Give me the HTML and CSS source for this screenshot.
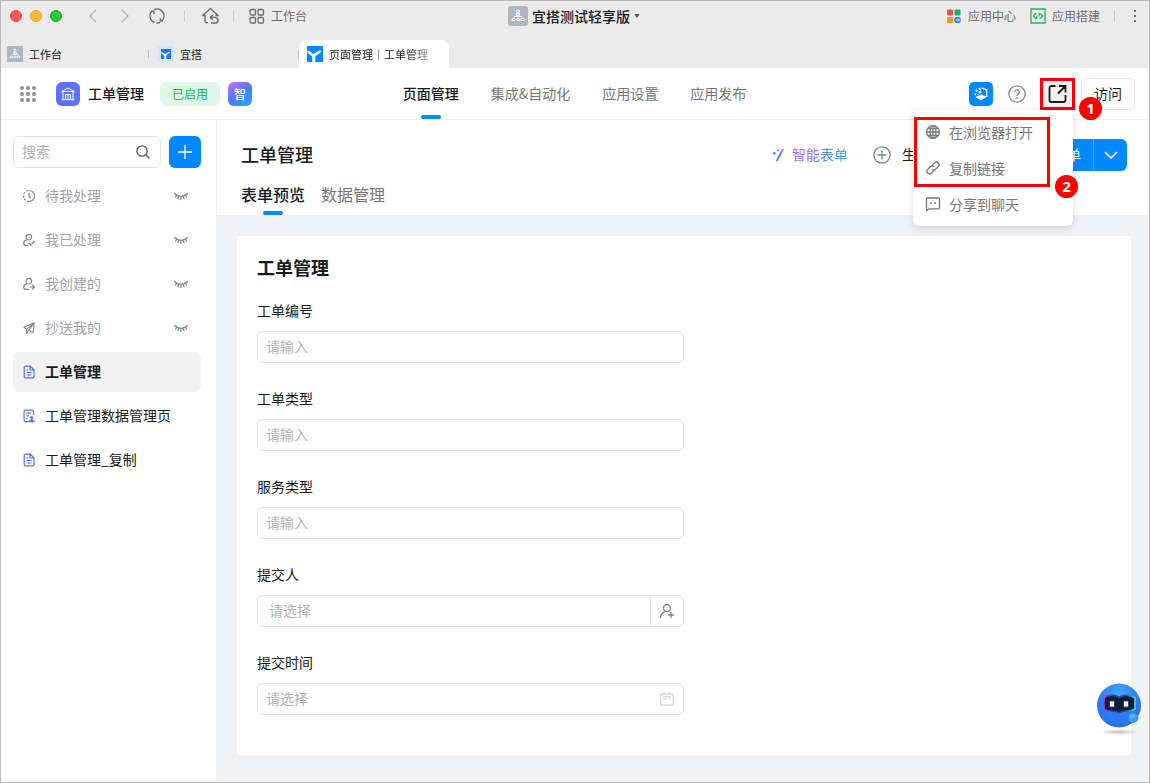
FILE: index.html
```html
<!DOCTYPE html>
<html lang="zh-CN">
<head>
<meta charset="utf-8">
<title>页面管理｜工单管理</title>
<link rel="stylesheet" href="styles.css">
</head>
<body>
<svg class="sprite" aria-hidden="true">
  <symbol id="eye-closed" viewBox="0 0 14 8">
    <path d="M.5 1.500Q7 7.300 13.500 1.500M2.500 3.200 1.500 5M4.700 4.300 4.100 6.300M7 4.700v2.600M9.300 4.300l.6 2M11.500 3.200l1 1.800" fill="none" stroke="#7f868c" stroke-width="1.300" stroke-linecap="round"/>
  </symbol>
  <symbol id="org" viewBox="0 0 20 20">
    <g fill="none" stroke="#fff" stroke-width="1">
      <circle cx="10" cy="5.600" r="1.500"/><path d="M8.200 9.200V9a1.800 1.800 0 0 1 3.600 0v.2zM6 10.500h8"/>
      <path d="M4 14.500v-.7a1.500 1.500 0 0 1 3 0v.7zM8.500 14.500v-.7a1.500 1.500 0 0 1 3 0v.7zM13 14.500v-.7a1.500 1.500 0 0 1 3 0v.7z"/>
    </g>
  </symbol>
  <symbol id="yida" viewBox="0 0 16 16">
    <path d="M0 5.200c1.600-.5 3.400.1 4.600 1.500C5.700 8 6.800 8 8.200 7.100L13.200 4.100 14.200 6.100 9.800 8.900C8.600 9.700 8.300 10.400 8.300 11.600V16H5.300V12C5.300 10.500 4.800 9.900 3.700 9.200C2.300 8.500 1 7.500 0 5.200z" fill="#fff"/>
  </symbol>
  <symbol id="doc" viewBox="0 0 12 14">
    <path d="M2.500 1.200h4.700L11 4.800v6.700a1.300 1.300 0 0 1-1.300 1.300H2.500a1.300 1.300 0 0 1-1.300-1.300v-9A1.300 1.300 0 0 1 2.500 1.200zM7 1.400v3.600h3.800M3.500 4.900h1.700M3.500 7.500h5M3.500 10h5" fill="none" stroke="#4f74ff" stroke-width="1.200" stroke-linejoin="round"/>
  </symbol>
</svg>

<header class="titlebar">
  <div class="toolbar">
    <div class="toolbar-left">
      <div class="lights"><span class="light red"></span><span class="light yellow"></span><span class="light green"></span></div>
      <button class="tool" aria-label="后退"><svg width="16" height="16" viewBox="0 0 16 16"><path d="M11 2 5 8l6 6" fill="none" stroke="#b0b0b0" stroke-width="1.300"/></svg></button>
      <button class="tool" aria-label="前进"><svg width="16" height="16" viewBox="0 0 16 16"><path d="m5 2 6 6-6 6" fill="none" stroke="#b0b0b0" stroke-width="1.300"/></svg></button>
      <button class="tool" aria-label="刷新"><svg width="16" height="16" viewBox="0 0 16 16"><path d="M5.300 14.500A7 7 0 0 1 3 3.100M5 1.700A7 7 0 0 1 13 12.900M11.200 14.200A7 7 0 0 1 7.500 15M2 3.200h2.800V6M14.200 12.800h-2.800V10" fill="none" stroke="#6a6a6a" stroke-width="1.400"/></svg></button>
      <span class="rule"></span>
      <button class="tool" aria-label="主页"><svg width="18" height="18" viewBox="0 0 18 18"><path d="M7 15.600H5.500a1.400 1.400 0 0 1-1.400-1.400V8.500H1.700L9.500 1.500l7.500 7h-2.600M9.500 10.400h4.700a2.800 2.800 0 0 1 0 5.600H10M11.800 8l-2.500 2.400 2.500 2.400" fill="none" stroke="#6a6a6a" stroke-width="1.400" stroke-linejoin="round"/></svg></button>
      <span class="rule"></span>
      <button class="tool tool-label"><svg width="16" height="16" viewBox="0 0 16 16"><g fill="none" stroke="#6a6a6a" stroke-width="1.300"><rect x="1" y="1.500" width="5.500" height="5.500" rx="1.200"/><rect x="9" y="1.500" width="5.500" height="5.500" rx="1.200"/><rect x="1" y="9.500" width="5.500" height="5.500" rx="1.200"/><rect x="9" y="9.500" width="5.500" height="5.500" rx="1.200"/></g></svg>工作台</button>
    </div>
    <button class="org-switch"><span class="org-icon"><svg width="20" height="20"><use href="#org"/></svg></span>宜搭测试轻享版<svg width="6" height="4" viewBox="0 0 6 4"><path d="M.3 0h5.400L3 4z" fill="#555"/></svg></button>
    <div class="toolbar-right">
      <button class="tool tool-label"><svg width="16" height="16" viewBox="0 0 16 16"><rect x="1" y="1.500" width="6" height="6" rx="1" fill="#fb4a3e"/><rect x="8.500" y="1.500" width="6" height="6" rx="1" fill="#16b364"/><rect x="1" y="9" width="6" height="6" rx="1" fill="#ff9219"/><circle cx="11.500" cy="12" r="3.300" fill="#2f80f5"/><path d="M9.700 12h3.400M11.800 10.500l1.500 1.500-1.500 1.500" fill="none" stroke="#fff" stroke-width=".9"/></svg>应用中心</button>
      <button class="tool tool-label"><svg width="16" height="16" viewBox="0 0 16 16"><path d="M1 1h14v14H1z" fill="none" stroke="#22b455" stroke-width="1.300"/><path d="M6.500 5.500h-1L3.300 8l2.200 2.500h1.300V7.500M9.500 10.500h1L12.700 8l-2.200-2.500H9.200v3" fill="none" stroke="#22b455" stroke-width="1.200"/></svg>应用搭建</button>
      <span class="rule"></span>
      <button class="tool" aria-label="更多"><svg width="16" height="16" viewBox="0 0 16 16"><g fill="#707070"><rect x="7" y="2" width="2" height="2"/><rect x="7" y="7" width="2" height="2"/><rect x="7" y="12" width="2" height="2"/></g></svg></button>
    </div>
  </div>
  <nav class="window-tabs" aria-label="窗口标签">
    <a class="window-tab" href="#"><span class="tab-icon gray"><svg width="16" height="16"><use href="#org"/></svg></span>工作台</a>
    <a class="window-tab" href="#"><span class="tab-icon pale"><svg width="10" height="10"><rect width="10" height="10" fill="#1677f5"/><use href="#yida"/></svg></span>宜搭</a>
    <a class="window-tab current" href="#"><span class="tab-icon blue"><svg width="16" height="16"><use href="#yida"/></svg></span><span class="fading">页面管理｜工单管理</span></a>
  </nav>
</header>

<header class="app-header">
  <div class="app-left">
    <button class="tool" aria-label="全部应用"><svg width="16" height="16" viewBox="0 0 16 16"><g fill="#8a9096"><circle cx="2" cy="2" r="2"/><circle cx="8" cy="2" r="2"/><circle cx="14" cy="2" r="2"/><circle cx="2" cy="8" r="2"/><circle cx="8" cy="8" r="2"/><circle cx="14" cy="8" r="2"/><circle cx="2" cy="14" r="2"/><circle cx="8" cy="14" r="2"/><circle cx="14" cy="14" r="2"/></g></svg></button>
    <span class="app-logo"><svg width="14" height="14" viewBox="0 0 14 14"><path d="M.8 4.500 7 1l6.200 3.500zM2 4.800v7.400M12 4.800v7.400M.5 12.700h13M4.500 12V7.500h5V12M7 7.500V12" fill="none" stroke="#fff" stroke-width="1"/></svg></span>
    <strong class="app-name">工单管理</strong>
    <span class="status">已启用</span>
    <span class="smart">智</span>
  </div>
  <nav class="app-nav" aria-label="应用导航">
    <a class="current" href="#">页面管理</a>
    <a href="#">集成&amp;自动化</a>
    <a href="#">应用设置</a>
    <a href="#">应用发布</a>
  </nav>
  <div class="app-right">
    <button class="assistant" aria-label="助手"><svg width="16" height="16" viewBox="0 0 16 16"><path d="M2.300 11 8 8.600l5.700 2.200L8 14.600z" fill="#fff"/><path d="M8.500 1.800 13.700 4v7" fill="none" stroke="#fff" stroke-width="1.300"/><path d="M2 4.300 4 3.300l1.400 1.200L3.700 6.200zM1.600 7.200l1.800.6-.6 1.800-1.200-.5zM5.200 2.400 7.200 1.500l.8 1.900-1.800.7zM5.200 5.600l2.600-1.100.8 1.800-2.200 1.500zM4.200 7.600l1.400.4-.9 1.300z" fill="#fff"/></svg></button>
    <button class="tool" aria-label="帮助"><svg width="18" height="18" viewBox="0 0 18 18"><circle cx="9" cy="9" r="8.200" fill="none" stroke="#878d93" stroke-width="1.300"/><path d="M6.700 7.200a2.300 2.300 0 1 1 3.400 2C9.300 9.700 9 10 9 10.900" fill="none" stroke="#878d93" stroke-width="1.300"/><circle cx="9" cy="13" r=".9" fill="#878d93"/></svg></button>
    <div class="share">
      <button class="share-button" aria-label="分享" aria-expanded="true"><svg width="20" height="20" viewBox="0 0 20 20"><path d="M7.500 2H3.500a2 2 0 0 0-2 2v12a2 2 0 0 0 2 2h12a2 2 0 0 0 2-2v-5M11 2h6.500v6.500M17.500 2l-7.500 7.500" fill="none" stroke="#171a1d" stroke-width="1.800"/></svg></button>
      <span class="step step-one">1</span>
      <div class="share-menu">
        <button class="menu-item"><svg width="16" height="16" viewBox="0 0 16 16"><g fill="none" stroke="#72777b" stroke-width="1.300"><circle cx="8" cy="8" r="6.400"/><ellipse cx="8" cy="8" rx="3" ry="6.400"/><path d="M8 1.600v12.800M1.600 8h12.800M2.600 4.700h10.800M2.600 11.300h10.800"/></g></svg>在浏览器打开</button>
        <button class="menu-item"><svg width="16" height="16" viewBox="0 0 16 16"><path d="M6.800 5.600 9.500 2.900a2.650 2.650 0 0 1 3.750 3.750L10.600 9.300a2.650 2.650 0 0 1-3.800 0M9.200 10.400l-2.700 2.700a2.650 2.650 0 0 1-3.750-3.750L5.400 6.700a2.650 2.650 0 0 1 3.800 0" fill="none" stroke="#72777b" stroke-width="1.300"/></svg>复制链接</button>
        <button class="menu-item"><svg width="16" height="16" viewBox="0 0 16 16"><path d="M2.500 2h11a1 1 0 0 1 1 1v8.800a1 1 0 0 1-1 1H4.200L1.500 14.600V3a1 1 0 0 1 1-1z" fill="none" stroke="#72777b" stroke-width="1.300"/><path d="M5 6.300h1.600v1.600H5zM9.400 6.300H11v1.600H9.400z" fill="#72777b"/></svg>分享到聊天</button>
        <span class="outline"></span>
        <span class="step step-two">2</span>
      </div>
    </div>
    <button class="visit">访问</button>
  </div>
</header>

<div class="workspace">
  <aside class="sidebar">
    <div class="search-row">
      <div class="search"><input type="search" placeholder="搜索" aria-label="搜索"><svg width="14" height="14" viewBox="0 0 14 14"><circle cx="6" cy="6" r="5.200" fill="none" stroke="#555a5e" stroke-width="1.300"/><path d="m9.800 9.800 3.600 3.600" stroke="#555a5e" stroke-width="1.400"/></svg></div>
      <button class="add" aria-label="新建"><svg width="14" height="14" viewBox="0 0 14 14"><path d="M7 0v14M0 7h14" stroke="#fff" stroke-width="1.300"/></svg></button>
    </div>
    <nav class="pages" aria-label="页面">
      <a class="page muted" href="#"><svg width="12" height="14" viewBox="0 0 12 14"><path d="M6 1.500a5.500 5.500 0 0 1 0 11M6 4v3.300l2 1.700" fill="none" stroke="#7f868c" stroke-width="1.200"/><path d="M6 12.500a5.500 5.500 0 0 1 0-11" fill="none" stroke="#7f868c" stroke-width="1.200" stroke-dasharray="2 1.500"/></svg><span>待我处理</span><svg width="14" height="8"><use href="#eye-closed"/></svg></a>
      <a class="page muted" href="#"><svg width="12" height="14" viewBox="0 0 12 14"><path d="M3.900 6.800C1.800 7.200.7 8.600.7 10.300c0 1.200.8 2 2 2h2.500M5.800 9.800l2.100 2.300 3.600-4.200" fill="none" stroke="#7f868c" stroke-width="1.200"/><circle cx="5.800" cy="4.200" r="2.800" fill="none" stroke="#7f868c" stroke-width="1.200"/></svg><span>我已处理</span><svg width="14" height="8"><use href="#eye-closed"/></svg></a>
      <a class="page muted" href="#"><svg width="12" height="14" viewBox="0 0 12 14"><path d="M3.900 6.800C1.800 7.200.7 8.600.7 10.300c0 1.200.8 2 2 2h3.500M6.500 10h5M9.200 7.600l2.400 2.400-2.400 2.400" fill="none" stroke="#7f868c" stroke-width="1.200"/><circle cx="5.800" cy="4.200" r="2.800" fill="none" stroke="#7f868c" stroke-width="1.200"/></svg><span>我创建的</span><svg width="14" height="8"><use href="#eye-closed"/></svg></a>
      <a class="page muted" href="#"><svg width="12" height="14" viewBox="0 0 12 14"><path d="M11.300 1.800.8 6.300l2.900 1.900L11.300 1.800l-1.100 9.900-4.700-2.400zM3.700 8.200v4.300l1.800-3.200" fill="none" stroke="#7f868c" stroke-width="1.100" stroke-linejoin="round"/></svg><span>抄送我的</span><svg width="14" height="8"><use href="#eye-closed"/></svg></a>
      <a class="page current" href="#"><svg width="12" height="14"><use href="#doc"/></svg><span>工单管理</span></a>
      <a class="page" href="#"><svg width="12" height="14" viewBox="0 0 12 14"><path d="M5.500 12.600h-3A1.400 1.400 0 0 1 1.100 11.200V2.600a1.400 1.400 0 0 1 1.400-1.400h6.600a1.400 1.400 0 0 1 1.400 1.400V6M3.400 4.200h4.800M3.400 6.800H6M3.400 9.400h1.200" fill="none" stroke="#4f74ff" stroke-width="1.200"/><circle cx="8.700" cy="8.400" r="1.500" fill="#4f74ff"/><path d="M5.600 13.200v-1.400l2.200-.9V9.500h1.800v1.400l2.200.9v1.400z" fill="#4f74ff"/></svg><span>工单管理数据管理页</span></a>
      <a class="page" href="#"><svg width="12" height="14"><use href="#doc"/></svg><span>工单管理_复制</span></a>
    </nav>
  </aside>

  <main class="main">
    <div class="main-head">
      <div class="title-row">
        <h1>工单管理</h1>
        <button class="action smart-form"><svg width="12" height="14" viewBox="0 0 12 14"><defs><linearGradient id="wand" x1="1" y1="0" x2="0" y2="1"><stop offset="0" stop-color="#c56af0"/><stop offset=".6" stop-color="#4a7dff"/><stop offset="1" stop-color="#2f9cff"/></linearGradient></defs><path d="M10.800 1.500 5 12.500" stroke="url(#wand)" stroke-width="1.800" stroke-linecap="round"/><path d="m2.300 3.200.7 1.300 1.300.7L3 5.900 2.300 7.200l-.7-1.300L.3 5.200l1.300-.7zM5 1.800h2v1.400H5z" fill="#3f86ff"/></svg><span>智能表单</span></button>
        <button class="action generate"><svg width="18" height="18" viewBox="0 0 18 18"><circle cx="9" cy="9" r="8.200" fill="none" stroke="#7f868c" stroke-width="1.300"/><path d="M9 4.500v9M4.500 9h9" stroke="#7f868c" stroke-width="1.300"/></svg><span>生成</span></button>
        <div class="split"><button class="edit">编辑表单</button><button class="more" aria-label="更多编辑操作"><svg width="14" height="8" viewBox="0 0 14 8"><path d="m1 1 6 6 6-6" fill="none" stroke="#fff" stroke-width="1.600"/></svg></button></div>
      </div>
      <nav class="view-tabs" aria-label="视图"><a class="current" href="#">表单预览</a><a href="#">数据管理</a></nav>
    </div>
    <form class="card">
      <h2>工单管理</h2>
      <div class="field"><label for="number">工单编号</label><div class="control"><input id="number" type="text" placeholder="请输入"></div></div>
      <div class="field"><label for="type">工单类型</label><div class="control"><input id="type" type="text" placeholder="请输入"></div></div>
      <div class="field"><label for="service">服务类型</label><div class="control"><input id="service" type="text" placeholder="请输入"></div></div>
      <div class="field"><label for="person">提交人</label><div class="control person"><input id="person" type="text" placeholder="请选择"><button type="button" aria-label="选择人员"><svg width="16" height="16" viewBox="0 0 16 16"><circle cx="8" cy="5" r="3.500" fill="none" stroke="#7f868c" stroke-width="1.300"/><path d="M1.500 15c.2-3 1.600-5.200 4.400-6.400M12 9.200v5.600M9.200 12h5.600" fill="none" stroke="#7f868c" stroke-width="1.500"/></svg></button></div></div>
      <div class="field"><label for="time">提交时间</label><div class="control"><input id="time" type="text" placeholder="请选择"><svg class="calendar" width="14" height="14" viewBox="0 0 14 14"><path d="M2 2h10a1.300 1.300 0 0 1 1.300 1.300v8.400A1.300 1.300 0 0 1 12 13H2a1.300 1.300 0 0 1-1.300-1.300V3.300A1.300 1.300 0 0 1 2 2zM4 .3v2M10 .3v2M3.300 4.800h7.400M3.300 7h3.900M9 7h1.500" fill="none" stroke="#c5c9cc" stroke-width="1.100"/></svg></div></div>
    </form>
  </main>
</div>

<button class="robot" aria-label="智能客服">
  <svg width="46" height="54" viewBox="0 0 46 54">
    <defs>
      <radialGradient id="body" cx=".5" cy=".25" r=".8"><stop offset="0" stop-color="#45a6f8"/><stop offset=".6" stop-color="#2c7bf2"/><stop offset="1" stop-color="#2a6fe8"/></radialGradient>
      <linearGradient id="rim"><stop offset="0" stop-color="#c22cf2"/><stop offset=".3" stop-color="#2b3c9d"/><stop offset=".7" stop-color="#2b4c9d"/><stop offset="1" stop-color="#34e1e4"/></linearGradient>
      <radialGradient id="floor"><stop offset="0" stop-color="#bdbdbd"/><stop offset="1" stop-color="#bdbdbd" stop-opacity="0"/></radialGradient>
    </defs>
    <ellipse cx="23" cy="50" rx="20" ry="3" fill="url(#floor)"/>
    <circle cx="23" cy="23.500" r="22" fill="url(#body)"/>
    <path d="M11 14c4-1 9-.5 12 1.500 3-2 8-2.500 12-1.500l4 2v11l-5 1.700c-4 .3-8 .3-11 2.300-3-2-7-2-11-2.300l-4-1.700V16z" fill="#101d36" stroke="url(#rim)" stroke-width="1.600" stroke-linejoin="round"/>
    <rect x="13.500" y="19" width="5" height="6" rx="1" fill="#fff" stroke="#285176"/><rect x="27.500" y="19" width="5" height="6" rx="1" fill="#fff" stroke="#285176"/>
    <circle cx="37.500" cy="36" r="5" fill="#3b98f7"/><ellipse cx="36" cy="34" rx="3" ry="2" fill="#5cb2fb"/>
  </svg>
</button>
</body>
</html>
```
FILE: styles.css
```css
* { box-sizing: border-box; }

body {
  margin: 0;
  min-height: 100vh;
  display: flex;
  flex-direction: column;
  border: 1px solid #b9b9b9;
  background: #fff;
  color: #171a1d;
  font: 14px/22px "Noto Sans CJK SC", sans-serif;
}

.sprite { position: absolute; width: 0; height: 0; }
svg { display: block; flex: none; }
a { color: inherit; text-decoration: none; }
button, input { font: inherit; color: inherit; }
button { margin: 0; padding: 0; border: 0; background: none; cursor: pointer; }
h1, h2 { margin: 0; font-size: 18px; line-height: 24px; font-weight: 500; }

/* Title bar */
.titlebar { background: #ebebeb; }
.toolbar {
  display: grid;
  grid-template-columns: 1fr auto 1fr;
  align-items: center;
  height: 30px;
  padding: 0 6px 0 4px;
}
.toolbar-left, .toolbar-right { display: flex; align-items: center; }
.toolbar-left { gap: 16px; padding-left: 5px; }
.toolbar-right { justify-content: flex-end; gap: 14px; }
.lights { display: flex; gap: 8px; margin-right: 7px; }
.light { width: 12px; height: 12px; border-radius: 50%; }
.red { background: #fc5b54; border: 1px solid #e2463f; }
.yellow { background: #fdbb2d; border: 1px solid #dfa023; }
.green { background: #27c93f; border: 1px solid #1aab29; }
.tool { display: flex; align-items: center; }
.tool-label { gap: 6px; font-size: 12px; line-height: 20px; color: #6c6c6c; }
.rule { width: 1px; height: 12px; background: #cbcbcb; }
.toolbar-left .rule { margin-left: 3px; }
.toolbar-left .rule ~ .rule { margin: 0 -1px 0 -2px; }
.toolbar-right .rule { margin-right: -2px; }
.org-switch { display: flex; align-items: center; gap: 4px; font-weight: 500; }
.org-icon { background: #aeb6c2; border-radius: 3px; }

.window-tabs { display: flex; align-items: flex-end; padding-top: 9px; }
.window-tab {
  display: flex;
  align-items: center;
  gap: 6px;
  width: 150px;
  height: 28px;
  padding-left: 7px;
  font-size: 11px;
  line-height: 18px;
  background: linear-gradient(#bdbdbd, #bdbdbd) 147px center / 1px 8px no-repeat;
}
.window-tab.current { margin-left: -2px; padding-left: 8px; background: #fff; border-radius: 8px 8px 0 0; }
.window-tab:first-child { padding-left: 6px; }
.tab-icon { display: grid; place-items: center; width: 16px; height: 16px; flex: none; }
.gray { background: #aeb6c2; }
.pale { background: #cfe8fb; }
.blue { background: #0089ff; }
.fading {
  white-space: nowrap;
  color: transparent;
  background: linear-gradient(90deg, #171a1d 75%, #999 100%);
  -webkit-background-clip: text;
  background-clip: text;
}

/* Application header */
.app-header {
  display: grid;
  grid-template-columns: 1fr auto 1fr;
  align-items: center;
  height: 52px;
  padding: 0 14px 0 13px;
  border-bottom: 1px solid #f0f0f1;
}
.app-left, .app-right { display: flex; align-items: center; }
.app-left { padding-left: 6px; }
.app-logo { display: grid; place-items: center; width: 24px; height: 24px; margin: 0 8px 0 20px; border-radius: 6px; background: #5c72ff; }
.app-name { padding-bottom: 2px; font-weight: 500; }
.status { margin: 0 8px 0 16px; padding: 0 12px; border-radius: 6px; background: #e0f6e8; color: #15b84b; font-size: 12px; line-height: 24px; }
.smart { width: 24px; border-radius: 6px; background: linear-gradient(145deg, #d070ef, #4b78ff 50%, #2ea9ff); color: #fff; font-size: 12px; line-height: 24px; text-align: center; font-weight: 500; }
.app-nav { display: flex; align-self: stretch; gap: 32px; }
.app-nav a { position: relative; line-height: 51px; color: #747677; }
.app-nav .current, .view-tabs .current { color: #171a1d; font-weight: 500; }
.app-nav .current::after, .view-tabs .current::after {
  content: "";
  position: absolute;
  left: 50%;
  bottom: 0;
  width: 20px;
  height: 4px;
  margin-left: -10px;
  border-radius: 2px;
  background: #0089ff;
}
.app-right { justify-content: flex-end; }
.assistant { display: grid; place-items: center; width: 24px; height: 24px; margin-right: 15px; border-radius: 5px; background: #0089ff; }
.share { position: relative; z-index: 2; margin: 0 6px 0 14px; }
.share-button { display: grid; place-items: center; width: 35px; height: 32px; border: 3px solid #fa0000; background: #f0f0f1; }
.visit { width: 54px; height: 32px; padding-bottom: 2px; border: 1px solid #e3e4e5; border-radius: 6px; }
.share-menu {
  position: absolute;
  top: 100%;
  right: 2px;
  width: 160px;
  padding: 4px 0;
  border-radius: 6px;
  background: #fff;
  box-shadow: 0 2px 10px rgba(0, 0, 0, .14);
}
.menu-item { display: flex; align-items: center; gap: 8px; width: 100%; height: 36px; padding-left: 12px; color: #747677; }
.outline { position: absolute; top: 7px; left: 1px; width: 136px; height: 70px; border: 3px solid #fa0000; pointer-events: none; }
.step {
  position: absolute;
  z-index: 1;
  width: 23px;
  border-radius: 50%;
  background: #fa0000;
  color: #fff;
  font: bold 15px/23px "Open Sans", sans-serif;
  text-align: center;
}
.step-one { top: 19px; left: 39px; }
.step-two { top: 65px; left: 142px; }

/* Workspace */
.workspace { display: flex; flex: 1; }
.sidebar { width: 216px; flex: none; padding: 16px 15px 16px 12px; border-right: 1px solid #f0f0f1; }
.search-row { display: flex; gap: 8px; margin-bottom: 8px; }
.search { display: flex; align-items: center; flex: 1; min-width: 0; height: 32px; padding: 0 10px 0 8px; border: 1px solid #e3e4e5; border-radius: 6px; }
.search input { flex: 1; min-width: 0; height: 100%; padding: 0 0 2px; border: 0; outline: 0; background: none; }
input::placeholder { color: #b0b2b4; opacity: 1; }
.add { display: grid; place-items: center; width: 32px; height: 32px; border-radius: 6px; background: #0089ff; }
.pages { display: flex; flex-direction: column; gap: 4px; }
.page { display: flex; align-items: center; gap: 10px; height: 40px; padding: 0 13px 0 10px; border-radius: 6px; }
.page span { flex: 1; padding-bottom: 2px; white-space: nowrap; }
.page.muted { color: #a2a4a6; }
.page.current { background: #f2f2f3; font-weight: 700; }

.main { flex: 1; min-width: 0; background: #f1f2f4; }
.main-head { padding: 19px 22px 0 24px; background: #fff; }
.title-row { display: flex; align-items: center; }
.title-row h1 { margin-right: auto; padding-bottom: 2px; }
.action { display: flex; align-items: center; gap: 8px; margin-right: 25px; }
.action span { padding-bottom: 2px; }
.generate { gap: 11px; margin-right: 13px; }
.generate span { min-width: 98px; text-align: left; }
.smart-form span {
  color: transparent;
  background: linear-gradient(120deg, #bd65f2, #5b7cff 55%, #35b5ff);
  -webkit-background-clip: text;
  background-clip: text;
}
.split { display: flex; height: 32px; border-radius: 6px; overflow: hidden; background: #0089ff; color: #fff; }
.edit { padding: 0 12px 2px; }
.more { display: grid; place-items: center; width: 34px; border-left: 1px solid #4dacff; }
.view-tabs { display: flex; gap: 16px; margin-top: 4px; font-size: 16px; }
.view-tabs a { position: relative; padding-bottom: 2px; line-height: 38px; color: #747677; }

.card { margin: 21px 18px 27px 20px; padding: 19px 20px 16px; background: #fff; }
.card h2 { margin-bottom: 20px; font-weight: 700; }
.field { width: 50%; margin-bottom: 24px; }
.field label { display: block; margin-bottom: 10px; }
.control { display: flex; align-items: center; height: 32px; border: 1px solid #e3e4e5; border-radius: 6px; }
.control input { flex: 1; min-width: 0; height: 100%; padding: 0 8px 2px; border: 0; outline: 0; background: none; }
.control.person input { padding-left: 11px; }
.person button { display: grid; place-items: center; width: 33px; height: 100%; border-left: 1px solid #e3e4e5; }
.calendar { margin-right: 9px; }

.robot { position: fixed; right: 8px; bottom: 47px; }
```
